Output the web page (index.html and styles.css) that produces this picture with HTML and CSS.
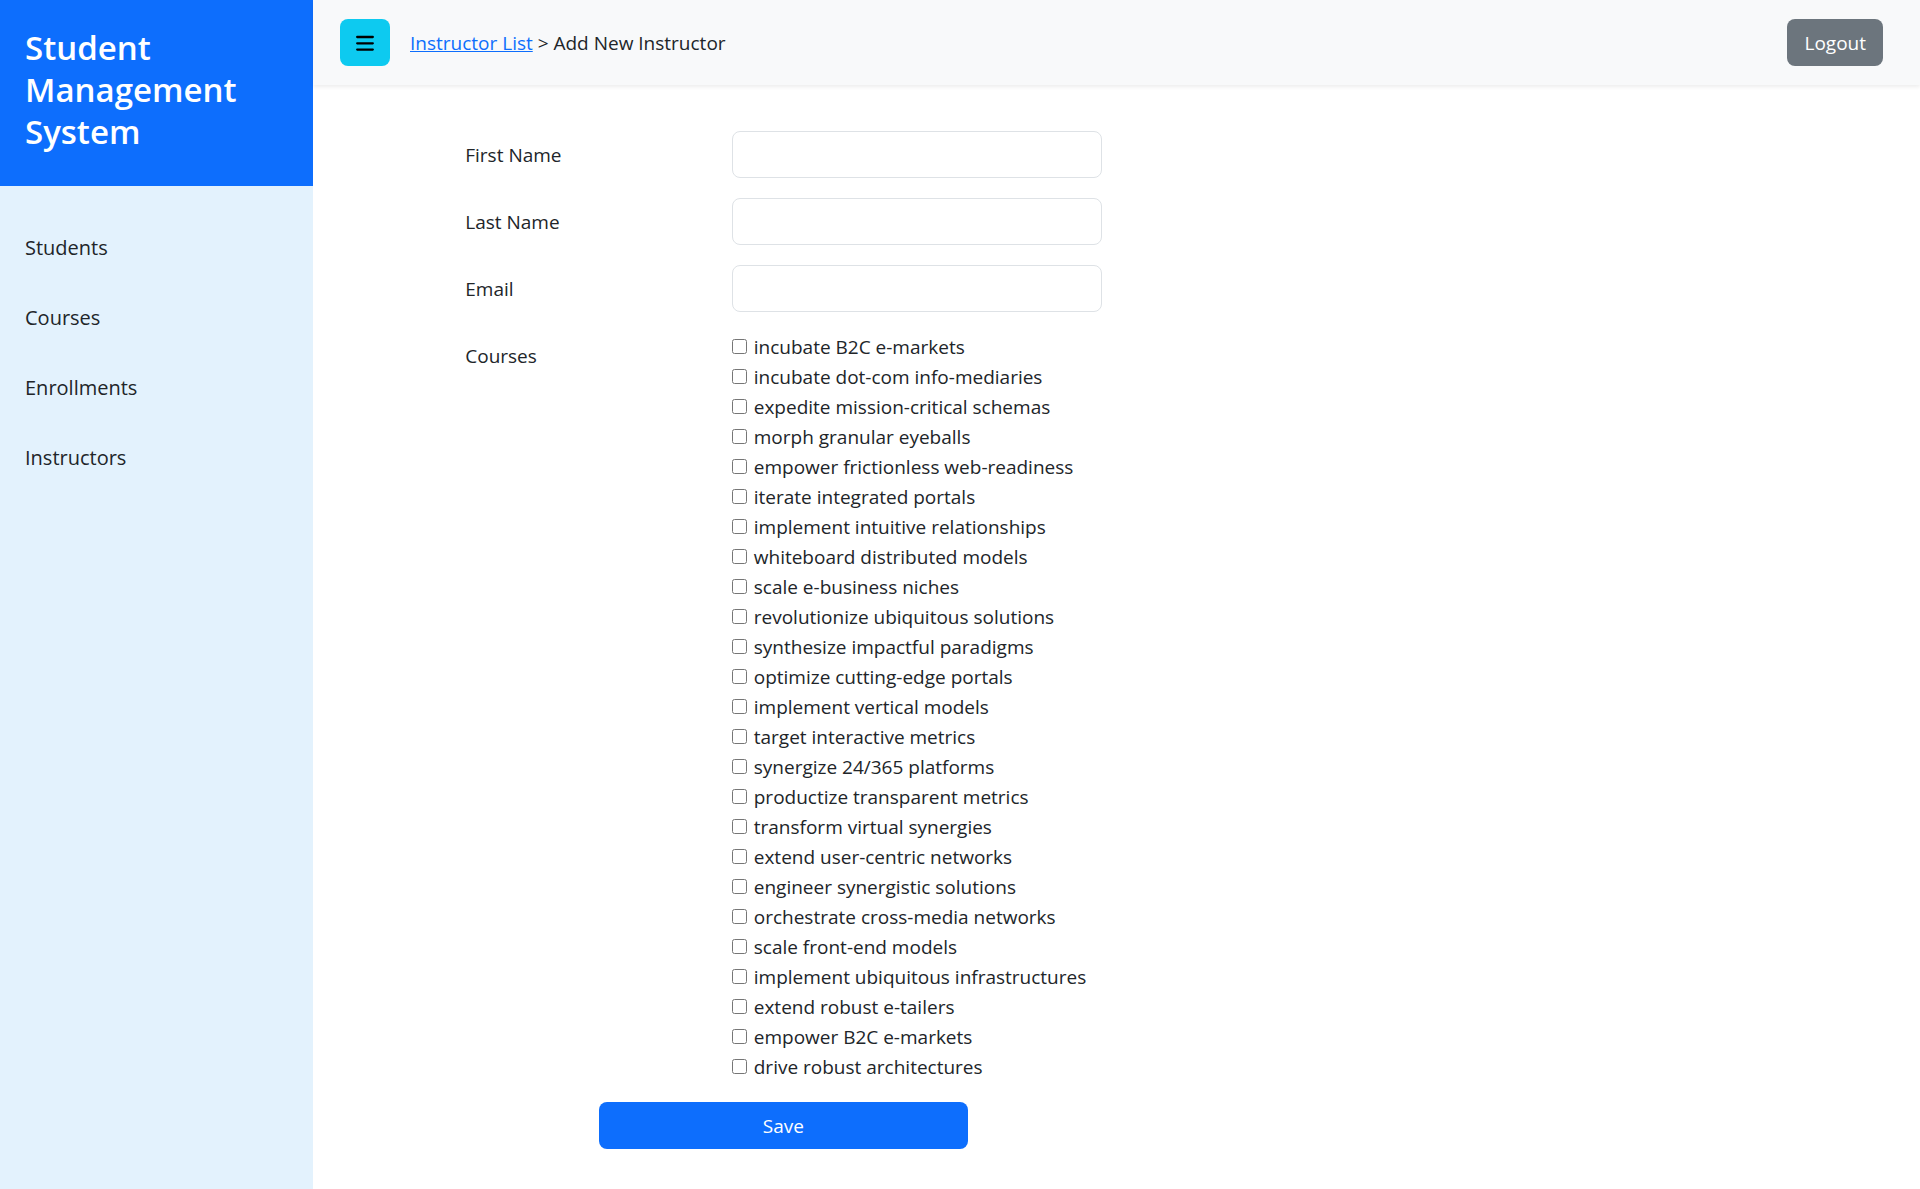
FILE: index.html
```html
<!DOCTYPE html>
<html lang="en">
<head>
<meta charset="utf-8">
<meta name="viewport" content="width=device-width, initial-scale=1">
<title>Add New Instructor</title>
<link rel="stylesheet" href="styles.css">
</head>
<body>
<aside class="sidebar">
  <h1 class="brand">Student Management System</h1>
  <nav class="side-nav">
    <a href="#students">Students</a>
    <a href="#courses">Courses</a>
    <a href="#enrollments">Enrollments</a>
    <a href="#instructors">Instructors</a>
  </nav>
</aside>
<div class="content">
  <header class="topbar">
    <button class="btn btn-menu" type="button" aria-label="Toggle menu">
      <svg class="menu-icon" viewBox="0 0 18 16" aria-hidden="true"><path d="M1.200 2h15.600M1.200 8.300h15.600M1.200 14.600h15.600"/></svg>
    </button>
    <div class="breadcrumb"><a href="#instructors">Instructor List</a> &gt; Add New Instructor</div>
    <button class="btn btn-logout" type="button">Logout</button>
  </header>
  <main>
    <form class="form">
      <label class="field-label" for="first-name">First Name</label>
      <input class="field" id="first-name" type="text">
      <label class="field-label" for="last-name">Last Name</label>
      <input class="field" id="last-name" type="text">
      <label class="field-label" for="email">Email</label>
      <input class="field" id="email" type="email">
      <div class="field-label" id="courses-label">Courses</div>
      <div class="course-list" role="group" aria-labelledby="courses-label">
        <label class="course"><input type="checkbox">incubate B2C e-markets</label>
        <label class="course"><input type="checkbox">incubate dot-com info-mediaries</label>
        <label class="course"><input type="checkbox">expedite mission-critical schemas</label>
        <label class="course"><input type="checkbox">morph granular eyeballs</label>
        <label class="course"><input type="checkbox">empower frictionless web-readiness</label>
        <label class="course"><input type="checkbox">iterate integrated portals</label>
        <label class="course"><input type="checkbox">implement intuitive relationships</label>
        <label class="course"><input type="checkbox">whiteboard distributed models</label>
        <label class="course"><input type="checkbox">scale e-business niches</label>
        <label class="course"><input type="checkbox">revolutionize ubiquitous solutions</label>
        <label class="course"><input type="checkbox">synthesize impactful paradigms</label>
        <label class="course"><input type="checkbox">optimize cutting-edge portals</label>
        <label class="course"><input type="checkbox">implement vertical models</label>
        <label class="course"><input type="checkbox">target interactive metrics</label>
        <label class="course"><input type="checkbox">synergize 24/365 platforms</label>
        <label class="course"><input type="checkbox">productize transparent metrics</label>
        <label class="course"><input type="checkbox">transform virtual synergies</label>
        <label class="course"><input type="checkbox">extend user-centric networks</label>
        <label class="course"><input type="checkbox">engineer synergistic solutions</label>
        <label class="course"><input type="checkbox">orchestrate cross-media networks</label>
        <label class="course"><input type="checkbox">scale front-end models</label>
        <label class="course"><input type="checkbox">implement ubiquitous infrastructures</label>
        <label class="course"><input type="checkbox">extend robust e-tailers</label>
        <label class="course"><input type="checkbox">empower B2C e-markets</label>
        <label class="course"><input type="checkbox">drive robust architectures</label>
      </div>
      <button class="btn btn-save" type="submit">Save</button>
    </form>
  </main>
</div>
</body>
</html>
```
FILE: styles.css
```css
* { box-sizing: border-box; }

body {
  margin: 0;
  min-height: 100vh;
  display: flex;
  background: #fff;
  color: #212529;
  font-family: "Open Sans", "Noto Sans", sans-serif;
  font-size: 19px;
  line-height: 30px;
}

a { color: #0d6efd; }

.sidebar {
  flex: 0 0 313px;
  background: #e3f2fd;
}

.brand {
  margin: 0;
  padding: 27px 25px 33px;
  background: #0d6efd;
  color: #fff;
  font-size: 33px;
  font-weight: 600;
  line-height: 42px;
}

.side-nav {
  display: flex;
  flex-direction: column;
  gap: 40px;
  padding: 47px 25px;
  font-size: 20px;
}

.side-nav a {
  color: #212529;
  text-decoration: none;
}

.content {
  flex: 1;
  min-width: 0;
}

.topbar {
  display: flex;
  align-items: center;
  gap: 20px;
  padding: 19px 37px 19px 27px;
  background: #f8f9fa;
  box-shadow: 0 2px 4px rgba(0, 0, 0, 0.075);
}

.btn {
  height: 47px;
  padding: 0 16px;
  border: 0;
  border-radius: 8px;
  color: #fff;
  font: inherit;
  cursor: pointer;
}

.btn-menu {
  background: #0dcaf0;
  color: #000;
}

.menu-icon {
  display: block;
  width: 18px;
  height: 16px;
  fill: none;
  stroke: currentColor;
  stroke-width: 2.3;
  stroke-linecap: round;
}

.btn-logout {
  margin-left: auto;
  padding: 0 17px;
  background: #6c757d;
}

.form {
  display: grid;
  grid-template-columns: repeat(12, 1fr);
  column-gap: 30px;
  row-gap: 20px;
  align-items: start;
  padding: 46px 19px 40px;
}

.field-label {
  grid-column: 2 / span 2;
  padding-top: 9px;
}

.field {
  grid-column: 4 / span 3;
  height: 47px;
  padding: 8px 15px;
  border: 1px solid #dee2e6;
  border-radius: 8px;
  background: #fff;
  color: inherit;
  font: inherit;
}

.course-list {
  grid-column: 4 / span 9;
  display: flex;
  flex-direction: column;
  align-items: flex-start;
}

.course {
  display: flex;
  align-items: center;
  gap: 7px;
}

.course input {
  width: 15px;
  height: 15px;
  margin: 0 0 2px;
}

.btn-save {
  grid-column: 3 / span 3;
  background: #0d6efd;
}
```
